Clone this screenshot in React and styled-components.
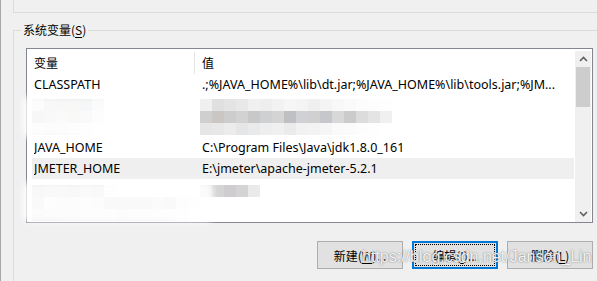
import React from "react";
import styled, { createGlobalStyle } from "styled-components";

const GlobalStyle = createGlobalStyle`
  body {
    margin: 0;
    background: #f0f0f0;
    font-family: "Noto Sans", "Noto Sans CJK SC", sans-serif;
    font-size: 12px;
    color: #000;
  }
`;

const Window = styled.div`
  position: relative;
  width: 597px;
  height: 281px;
  overflow: hidden;
  box-sizing: border-box;
  border-left: 1px solid #a8a8a8;
  background: #f0f0f0;
`;

const UpperGroup = styled.div`
  margin-left: 12px;
  height: 12px;
  border-left: 1px solid #dcdcdc;
  border-bottom: 1px solid #dcdcdc;
`;

const GroupBox = styled.div`
  margin: 17px 0 0 12px;
  border-left: 1px solid #dcdcdc;
  border-top: 1px solid #dcdcdc;
  height: 300px;
  padding-left: 12px;
`;

const Legend = styled.div`
  display: inline-block;
  margin: -10px 0 0 -5px;
  padding: 0 2px;
  background: #f0f0f0;
  font-family: "Noto Sans CJK SC", sans-serif;
  font-size: 12px;
  line-height: 18px;
  vertical-align: top;
`;

const Hotkey = styled.span`
  text-decoration: underline;
  text-underline-offset: 2px;
`;

const ListBox = styled.div`
  display: flex;
  width: 567px;
  height: 175px;
  box-sizing: border-box;
  border: 1px solid #828790;
  background: #fff;
`;

const ListContent = styled.div`
  flex: 1;
  padding-left: 5px;
  overflow: hidden;
`;

const HeaderRow = styled.div`
  display: flex;
  height: 25px;
  align-items: center;
  font-family: "Noto Sans CJK SC", sans-serif;
`;

const HeaderCell = styled.div`
  box-sizing: border-box;
  height: 22px;
  display: flex;
  align-items: center;
  padding-left: ${(p) => (p.$first ? "2px" : "7px")};
  width: ${(p) => (p.$first ? "163px" : "auto")};
  border-right: ${(p) => (p.$first ? "1px solid #e5e5e5" : "none")};
  margin-top: 2px;
`;

const Row = styled.div`
  display: grid;
  grid-template-columns: 168px 1fr;
  height: 21px;
  align-items: center;
  padding-left: 2px;
  width: 540px;
  background: ${(p) => (p.$selected ? "#efefef" : "transparent")};
  white-space: nowrap;
  font-size: 12.5px;
`;

const Cell = styled.div`
  overflow: hidden;
  line-height: 21px;
`;

const MosaicGrid = styled.div`
  display: grid;
  grid-template-columns: repeat(${(p) => p.$cols}, 12px);
  grid-auto-rows: 12px;
  filter: blur(0.6px);
`;

const Tile = styled.span`
  background: ${(p) => p.$c};
`;

const BlurRow = styled.div`
  display: flex;
  height: ${(p) => p.$h}px;
  align-items: flex-start;
  padding-top: ${(p) => p.$pt || 0}px;
  box-sizing: border-box;
`;

const BlurCell = styled.div`
  width: ${(p) => p.$w}px;
`;

const ScrollBar = styled.div`
  display: flex;
  flex-direction: column;
  width: 16px;
  margin: 2px 1px 0 0;
  background: #f0f0f0;
`;

const ScrollArrow = styled.div`
  height: 16px;
  display: flex;
  align-items: center;
  justify-content: center;
`;

const Thumb = styled.div`
  height: 40px;
  margin: 0 1px;
  background: #cdcdcd;
`;

const ScrollTrack = styled.div`
  flex: 1;
`;

const ButtonBar = styled.div`
  display: flex;
  justify-content: flex-end;
  gap: 9px;
  width: 567px;
  margin-top: 18px;
`;

const Button = styled.div`
  position: relative;
  width: 86px;
  height: 28px;
  box-sizing: border-box;
  display: flex;
  align-items: center;
  justify-content: center;
  background: #e1e1e1;
  border: ${(p) => (p.$focused ? "2px solid #0078d7" : "1px solid #adadad")};
  font-family: "Noto Sans CJK SC", sans-serif;
  font-size: 12px;
  ${(p) =>
    p.$focused &&
    `
    &::after {
      content: "";
      position: absolute;
      inset: 1px;
      border: 1px dotted #000;
    }
  `}
`;

const Smear = styled.div`
  position: absolute;
  background: rgba(255, 255, 255, 0.85);
  filter: blur(3px);
  border-radius: 6px;
`;

const Watermark = styled.div`
  position: absolute;
  left: 361px;
  top: 248px;
  font-family: "Liberation Sans", Arial, sans-serif;
  font-size: 16px;
  color: rgba(255, 255, 255, 0.9);
  text-shadow: 0 0 1.5px rgba(80, 80, 80, 0.85);
  white-space: nowrap;
`;

const Chevron = ({ up }) => (
  <svg width="9" height="6" viewBox="0 0 9 6">
    <path
      d={up ? "M1 5 L4.5 1.5 L8 5" : "M1 1 L4.5 4.5 L8 1"}
      fill="none"
      stroke="#606060"
      strokeWidth="1.6"
    />
  </svg>
);

const Mosaic = ({ rows }) => (
  <MosaicGrid $cols={rows[0].length}>
    {rows.flat().map((c, i) => (
      <Tile key={i} $c={c} />
    ))}
  </MosaicGrid>
);

const blurA = [
  ["#e8e8e8", "#d0d0d0", "#cfcfd2", "#d1ccc8", "#c4c7cc", "#e1e3e5"],
  ["#c9c7c6", "#d8d8d8", "#dcdcdc", "#d6d4d2", "#dedfe0", "#f2f2f2"],
  ["#eeeeee", "#e6e6e6", "#ebebeb", "#f0f0f0", "#f6f6f6", "#fbfbfb"],
];
const blurB = [
  ["#f0f0f0", "#e0e0e0", "#e4e4e4", "#e8e8e8", "#f0f0f0", "#eeeeee", "#f2f2f2", "#f6f6f6", "#f4f4f4", "#f0f0f0", "#f4f4f4", "#f8f8f8", "#fafafa", "#fcfcfc", "#fdfdfd", "#fefefe"],
  ["#cfcfcf", "#c9c6c4", "#cdcdcd", "#d2d2d2", "#c8c8c8", "#cfd0d2", "#d4d4d4", "#c0bfc2", "#cfd1d4", "#d0d0d0", "#c5c7ca", "#d8d8d8", "#cbcbcb", "#dcdcdc", "#e4e4e4", "#f0f0f0"],
  ["#e6e6e6", "#e8e8e8", "#ececec", "#e6e6e6", "#e8eaec", "#eeeeee", "#f0f0f0", "#ebebeb", "#f2f2f2", "#f3f3f3", "#f6f6f6", "#fafafa", "#fbfbfb", "#fdfdfd", "#fefefe", "#ffffff"],
];
const blurC = [
  ["#d2d2d2", "#d8d8d8", "#d6d6d6", "#d0d0d0", "#dcdcdc", "#d6d6d6", "#f4f4f4", "#ffffff", "#ffffff", "#ffffff", "#ffffff", "#ffffff", "#ffffff", "#ffffff", "#ffffff"],
  ["#d6d6d6", "#f2f2f2", "#ececec", "#e8e8e8", "#f0f0f0", "#ebebeb", "#d8d8d8", "#d4d4d4", "#d8d8d8", "#d8d8da", "#e0e0e0", "#d4d4d4", "#f0f0f0", "#f8f8f8", "#ffffff"],
  ["#e6e6e6", "#e8e8e8", "#eaeaea", "#ececec", "#eeeeee", "#f0f0f0", "#f0f0f0", "#ececec", "#eeeeee", "#f0f0f0", "#f2f2f2", "#f4f4f4", "#f8f8f8", "#fcfcfc", "#ffffff"],
];
const blurD = [["#e0e0e0", "#d4d4d4", "#cfcdd0", "#d4d4d4", "#eaeaea"]];

export default function App() {
  return (
    <>
      <GlobalStyle />
      <Window>
        <UpperGroup />
        <GroupBox>
          <Legend>
            系统变量(<Hotkey>S</Hotkey>)
          </Legend>
          <ListBox>
            <ListContent>
              <HeaderRow>
                <HeaderCell $first>变量</HeaderCell>
                <HeaderCell>值</HeaderCell>
              </HeaderRow>
              <Row>
                <Cell>CLASSPATH</Cell>
                <Cell>.;%JAVA_HOME%\lib\dt.jar;%JAVA_HOME%\lib\tools.jar;%JM...</Cell>
              </Row>
              <BlurRow $h={42} $pt={4}>
                <BlurCell $w={168}>
                  <Mosaic rows={blurA} />
                </BlurCell>
                <BlurCell $w={200}>
                  <Mosaic rows={blurB} />
                </BlurCell>
              </BlurRow>
              <Row>
                <Cell>JAVA_HOME</Cell>
                <Cell>C:\Program Files\Java\jdk1.8.0_161</Cell>
              </Row>
              <Row $selected>
                <Cell>JMETER_HOME</Cell>
                <Cell>E:\jmeter\apache-jmeter-5.2.1</Cell>
              </Row>
              <BlurRow $h={42} $pt={6}>
                <BlurCell $w={168}>
                  <Mosaic rows={blurC} />
                </BlurCell>
                <BlurCell $w={80}>
                  <Mosaic rows={blurD} />
                </BlurCell>
              </BlurRow>
            </ListContent>
            <ScrollBar>
              <ScrollArrow>
                <Chevron up />
              </ScrollArrow>
              <Thumb />
              <ScrollTrack />
              <ScrollArrow>
                <Chevron />
              </ScrollArrow>
            </ScrollBar>
          </ListBox>
          <ButtonBar>
            <Button>
              新建(<Hotkey>W</Hotkey>)...
            </Button>
            <Button $focused>
              编辑(<Hotkey>I</Hotkey>)...
            </Button>
            <Button>
              删除(<Hotkey>L</Hotkey>)
            </Button>
          </ButtonBar>
        </GroupBox>
        <Smear style={{ left: 22, top: 96, width: 90, height: 42 }} />
        <Smear style={{ left: 22, top: 182, width: 190, height: 40 }} />
        <Watermark>https://blog.csdn.net/Janson_Lin</Watermark>
      </Window>
    </>
  );
}
